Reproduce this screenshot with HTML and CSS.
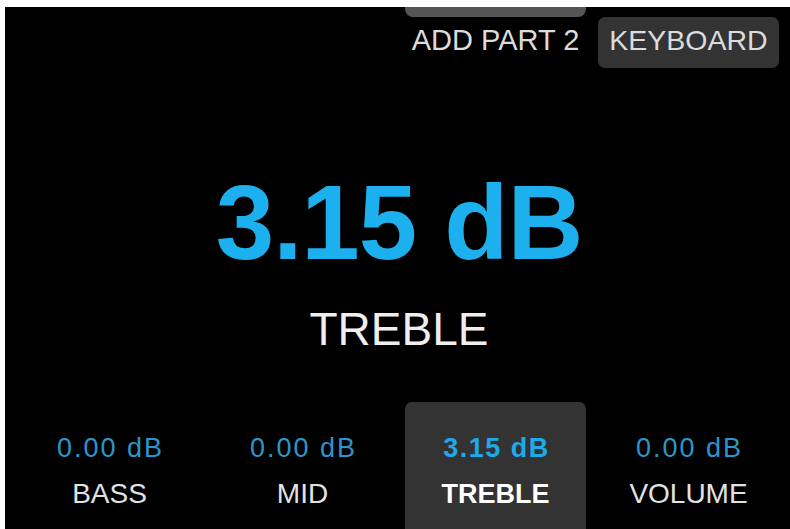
FILE: index.html
```html
<!DOCTYPE html>
<html>
<head>
<meta charset="utf-8">
<link rel="stylesheet" href="styles.css">
</head>
<body>
<div class="screen">
  <div class="header">
    <div class="handle"></div>
    <div class="add-part">ADD PART 2</div>
    <div class="kbd-btn">KEYBOARD</div>
  </div>
  <div class="main">
    <div class="big-value">3.15 dB</div>
    <div class="big-label">TREBLE</div>
  </div>
  <div class="tabs">
    <div class="tab">
      <div class="tab-value">0.00 dB</div>
      <div class="tab-label">BASS</div>
    </div>
    <div class="tab">
      <div class="tab-value">0.00 dB</div>
      <div class="tab-label">MID</div>
    </div>
    <div class="tab selected">
      <div class="tab-value">3.15 dB</div>
      <div class="tab-label">TREBLE</div>
    </div>
    <div class="tab">
      <div class="tab-value">0.00 dB</div>
      <div class="tab-label">VOLUME</div>
    </div>
  </div>
</div>
</body>
</html>
```

FILE: styles.css
```css
html, body {
  margin: 0;
  padding: 0;
  background: #ffffff;
  overflow: hidden;
}

.screen {
  margin: 7px 0 0 5px;
  width: 785px;
  height: 522px;
  background: #000000;
  box-sizing: border-box;
  padding: 0 11px 0 14px;
  display: flex;
  flex-direction: column;
  font-family: "Liberation Sans", Arial, sans-serif;
  color: #e6e6e6;
}

.header {
  display: grid;
  grid-template-columns: repeat(4, 1fr);
  grid-template-rows: 10px 51px;
  column-gap: 12px;
}

.handle {
  grid-column: 3;
  grid-row: 1;
  background: #555555;
  border-radius: 0 0 8px 8px;
}

.add-part,
.kbd-btn {
  grid-row: 2;
  font-size: 28.5px;
  line-height: 29px;
  padding: 9px 0 13px;
  text-align: center;
  color: #dcdcdc;
}

.add-part {
  grid-column: 3;
  font-size: 29px;
}

.kbd-btn {
  grid-column: 4;
  background: #333333;
  border-radius: 7px;
}

.main {
  display: flex;
  flex-direction: column;
  align-items: center;
}

.big-value {
  margin-top: 102px;
  font-size: 105px;
  line-height: 105px;
  font-weight: bold;
  letter-spacing: -1px;
  color: #1db0ef;
}

.big-label {
  margin-top: 31px;
  font-size: 46px;
  line-height: 46px;
  color: #eeeeee;
}

.tabs {
  margin-top: auto;
  display: grid;
  grid-template-columns: repeat(4, 1fr);
  column-gap: 12px;
  height: 127px;
}

.tab {
  display: flex;
  flex-direction: column;
  align-items: center;
  padding-top: 32px;
  border-radius: 7px 7px 0 0;
}

.tab.selected {
  background: #333333;
}

.tab-value {
  font-size: 27px;
  line-height: 28px;
  letter-spacing: 2px;
  padding-left: 2px;
  color: #2a96cc;
}

.tab-label {
  margin-top: 18px;
  font-size: 28px;
  line-height: 28px;
  color: #e2e2e2;
}

.tab.selected .tab-value {
  font-weight: bold;
  letter-spacing: 1.5px;
  color: #1ea9e8;
}

.tab.selected .tab-label {
  font-weight: bold;
  font-size: 27px;
  color: #ffffff;
}
```
